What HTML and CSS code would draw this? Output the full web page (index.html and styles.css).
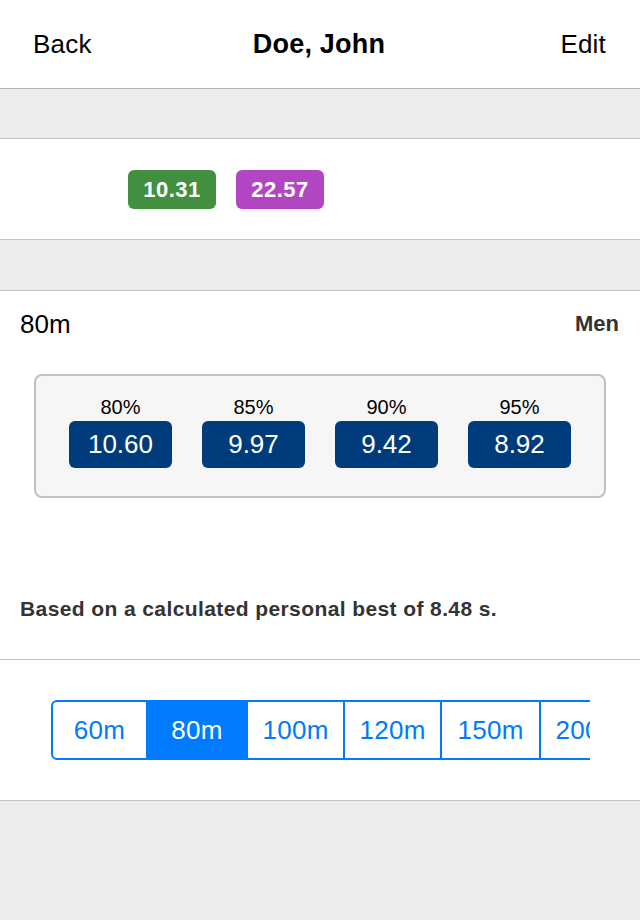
FILE: index.html
```html
<!DOCTYPE html>
<html>
<head>
<meta charset="utf-8">
<link rel="stylesheet" href="styles.css">
</head>
<body>
<div class="nav">
  <span class="nav-btn nav-left">Back</span>
  <span class="nav-title">Doe, John</span>
  <span class="nav-btn nav-right">Edit</span>
</div>
<div class="band band-top"></div>
<div class="section badges">
  <span class="badge badge-green">10.31</span>
  <span class="badge badge-purple">22.57</span>
</div>
<div class="band band-mid"></div>
<div class="section detail">
  <div class="detail-head">
    <span class="distance">80m</span>
    <span class="gender">Men</span>
  </div>
  <div class="box">
    <div class="pct">
      <div class="pct-label">80%</div>
      <div class="pct-value">10.60</div>
    </div>
    <div class="pct">
      <div class="pct-label">85%</div>
      <div class="pct-value">9.97</div>
    </div>
    <div class="pct">
      <div class="pct-label">90%</div>
      <div class="pct-value">9.42</div>
    </div>
    <div class="pct">
      <div class="pct-label">95%</div>
      <div class="pct-value">8.92</div>
    </div>
  </div>
  <p class="note">Based on a calculated personal best of 8.48 s.</p>
</div>
<div class="section seg-section">
  <div class="seg-clip">
    <div class="seg">
      <span class="seg-item s1">60m</span>
      <span class="seg-item s2 active">80m</span>
      <span class="seg-item s3">100m</span>
      <span class="seg-item s4">120m</span>
      <span class="seg-item s5">150m</span>
      <span class="seg-item s6">200m</span>
    </div>
  </div>
</div>
<div class="footer"></div>
</body>
</html>
```
FILE: styles.css
```css
html, body {
  margin: 0;
  padding: 0;
  background: #ececec;
  font-family: "Liberation Sans", Arial, Helvetica, sans-serif;
}
.nav {
  height: 88px;
  background: #fff;
  border-bottom: 1px solid #b4b4b4;
  display: grid;
  grid-template-columns: 1fr auto 1fr;
  align-items: center;
  padding: 0 34px 0 33px;
  font-size: 26px;
  letter-spacing: 0.2px;
  color: #000;
}
.nav-left { justify-self: start; }
.nav-right { justify-self: end; }
.nav-title {
  font-weight: bold;
  font-size: 27px;
  letter-spacing: 0.2px;
  margin-left: -1px;
}
.band {
  background: #ececec;
  border-bottom: 1px solid #c4c4c4;
}
.band-top { height: 49px; }
.band-mid { height: 50px; }
.section {
  background: #fff;
  border-bottom: 1px solid #c4c4c4;
  box-sizing: border-box;
}
.badges {
  height: 101px;
  padding: 31px 0 0 128px;
  display: flex;
  gap: 20px;
  align-items: flex-start;
}
.badge {
  width: 88px;
  height: 39px;
  border-radius: 6px;
  color: #fff;
  font-size: 22px;
  font-weight: bold;
  letter-spacing: 0.5px;
  display: flex;
  align-items: center;
  justify-content: center;
}
.badge-green { background: #418f3f; }
.badge-purple { background: #b246c2; }
.detail {
  height: 369px;
  padding-top: 19px;
}
.detail-head {
  display: flex;
  justify-content: space-between;
  align-items: center;
  padding: 0 21px 0 20px;
  height: 28px;
}
.distance {
  font-size: 26px;
  color: #000;
}
.gender {
  font-size: 22px;
  font-weight: bold;
  color: #333;
}
.box {
  margin: 36px 34px 0 34px;
  height: 124px;
  box-sizing: border-box;
  background: #f6f6f6;
  border: 2px solid #c2c2c2;
  border-radius: 8px;
  display: flex;
  justify-content: center;
  gap: 30px;
  padding-top: 20px;
}
.pct {
  width: 103px;
  display: flex;
  flex-direction: column;
  align-items: center;
}
.pct-label {
  font-size: 20px;
  line-height: 22px;
  height: 25px;
  color: #000;
}
.pct-value {
  width: 103px;
  height: 47px;
  border-radius: 6px;
  background: #003c7b;
  color: #fff;
  font-size: 26px;
  display: flex;
  align-items: center;
  justify-content: center;
}
.note {
  margin: 99px 0 0 20px;
  font-size: 21px;
  font-weight: bold;
  letter-spacing: 0.4px;
  color: #333;
  line-height: 24px;
}
.seg-section {
  height: 141px;
  padding: 40px 0 0 51px;
}
.seg-clip {
  width: 539px;
  height: 60px;
  overflow: hidden;
}
.seg {
  display: flex;
  width: max-content;
}
.seg-item {
  width: 99px;
  height: 60px;
  box-sizing: border-box;
  border: 2px solid #007aff;
  margin-left: -2px;
  color: #007aff;
  font-size: 26px;
  letter-spacing: 0.3px;
  display: flex;
  align-items: center;
  justify-content: center;
}
.seg-item.s1 {
  width: 97px;
  margin-left: 0;
  border-radius: 6px 0 0 6px;
}
.seg-item.s2 { width: 102px; }
.seg-item.s5 { width: 101px; }
.seg-item.active {
  background: #007aff;
  color: #fff;
}
.footer {
  height: 119px;
  background: #ececec;
}
```
